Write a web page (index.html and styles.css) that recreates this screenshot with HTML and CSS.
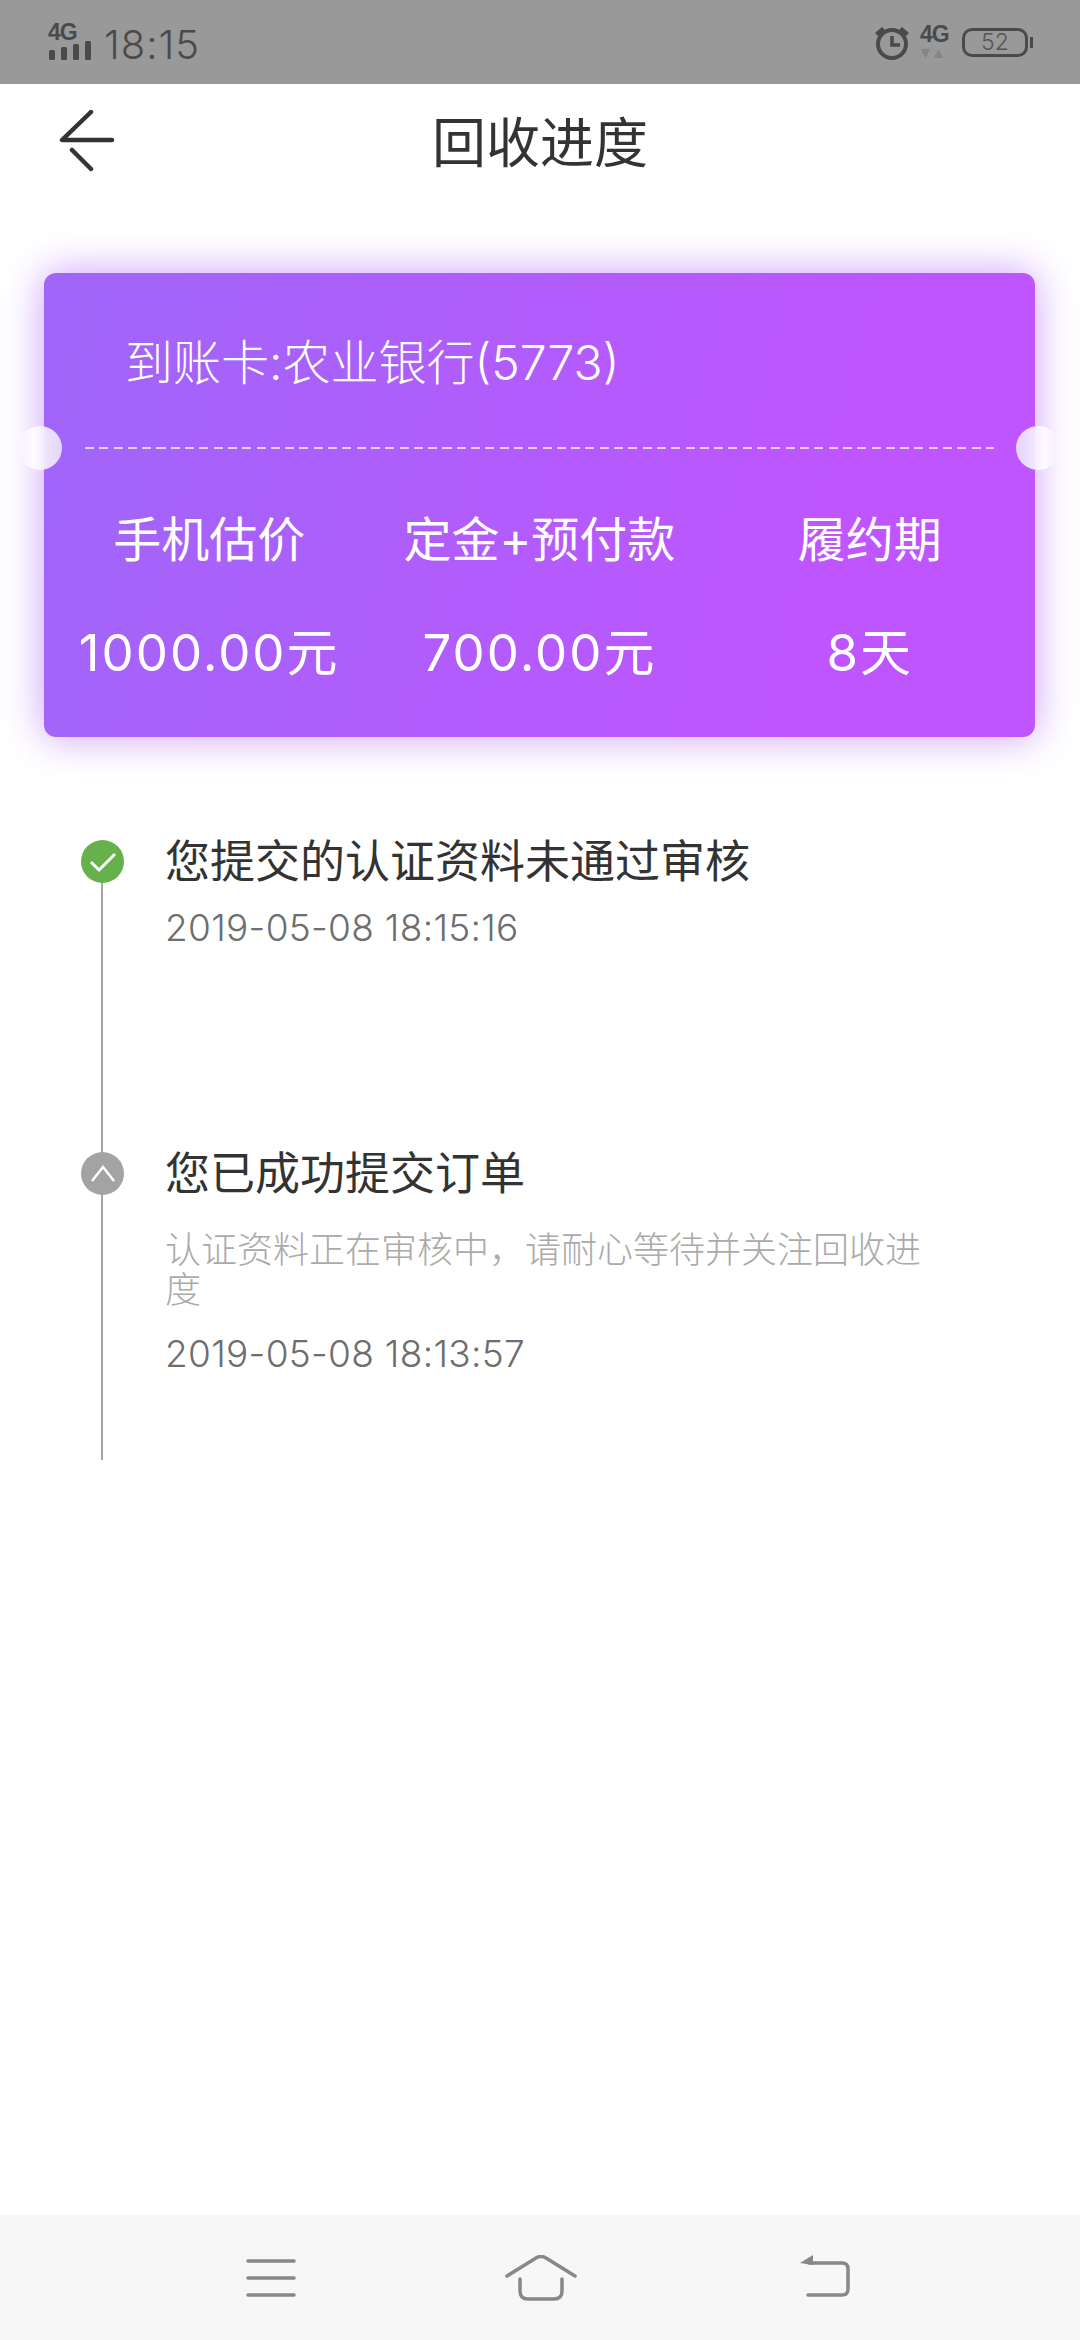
FILE: index.html
```html
<!DOCTYPE html>
<html lang="zh-CN">

<head>
    <meta charset="UTF-8">
    <meta name="viewport" content="width=device-width, initial-scale=1.0">
    <title>回收进度</title>

    <link rel="stylesheet" href="styles.css">
</head>

<body>
    <div class="status-bar">
        <div class="signal">
            <span class="net">4G</span>
            <svg class="bars" width="44" height="20" viewBox="0 0 44 20">
                <rect x="1" y="10" width="6" height="10" rx="1.5" />
                <rect x="13" y="7" width="6" height="13" rx="1.5" />
                <rect x="25" y="4" width="6" height="16" rx="1.5" />
                <rect x="37" y="1" width="6" height="19" rx="1.5" />
            </svg>
        </div>
        <span class="clock">18:15</span>
        <div class="status-right">
            <svg class="alarm" width="36" height="36" viewBox="0 0 36 36">
                <circle cx="18" cy="20" r="14" fill="none" stroke="#4a4a4a" stroke-width="4" />
                <path d="M18 12v9h8" fill="none" stroke="#4a4a4a" stroke-width="3.5" />
                <path d="M1 9l7-6 3 3-7 6zM35 9l-7-6-3 3 7 6z" fill="#4a4a4a" />
            </svg>
            <div class="data">
                <span class="net">4G</span>
                <svg width="24" height="10" viewBox="0 0 24 10">
                    <path d="M1 1h9l-4.500 9zM14 10h9l-4.500-9z" fill="#848484" />
                </svg>
            </div>
            <div class="battery"><span>52</span></div>
        </div>
    </div>

    <div class="header">
        <svg class="back" width="58" height="64" viewBox="0 0 58 64">
            <path d="M33 2L4 30h50M14 40l19 19" fill="none" stroke="#333" stroke-width="4.500" stroke-linecap="round" stroke-linejoin="round" />
        </svg>
        <h1>回收进度</h1>
    </div>

    <div class="card">
        <i class="notch left"></i>
        <i class="notch right"></i>
        <div class="account">到账卡:农业银行(5773)</div>
        <div class="dash"></div>
        <div class="stats">
            <div class="stat">
                <p>手机估价</p>
                <p class="num">1000.00元</p>
            </div>
            <div class="stat">
                <p>定金+预付款</p>
                <p class="num">700.00元</p>
            </div>
            <div class="stat">
                <p>履约期</p>
                <p class="num">8天</p>
            </div>
        </div>
    </div>

    <div class="timeline">
        <div class="step first">
            <div class="dot green">
                <svg width="28" height="22" viewBox="0 0 28 22">
                    <path d="M2 11l8 8L26 3" fill="none" stroke="#fff" stroke-width="3" />
                </svg>
            </div>
            <h2>您提交的认证资料未通过审核</h2>
            <p class="time">2019-05-08 18:15:16</p>
        </div>
        <div class="step second">
            <div class="dot gray">
                <svg width="26" height="20" viewBox="0 0 26 20">
                    <path d="M2 17L13 3l11 14" fill="none" stroke="#fff" stroke-width="2.500" />
                </svg>
            </div>
            <h2>您已成功提交订单</h2>
            <p class="desc">认证资料正在审核中，请耐心等待并关注回收进度</p>
            <p class="time">2019-05-08 18:13:57</p>
        </div>
    </div>

    <div class="nav">
        <svg width="50" height="38" viewBox="0 0 50 38">
            <path d="M2 2h46M2 19h46M2 36h46" stroke="#888" stroke-width="3.500" stroke-linecap="round" />
        </svg>
        <svg width="72" height="46" viewBox="0 0 72 46">
            <path d="M2 21L31 3q5-3 10 0l29 18M15 24v12q0 8 8 8h26q8 0 8-8V24" fill="none" stroke="#888" stroke-width="3.500" stroke-linecap="round" />
        </svg>
        <svg class="nav-back" width="52" height="42" viewBox="0 0 52 42">
            <path d="M1 8l13-8v10z" fill="#888" />
            <path d="M10 8h33q6 0 6 6v20q0 6-6 6H9" fill="none" stroke="#888" stroke-width="3.500" stroke-linecap="round" />
        </svg>
    </div>
</body>

</html>
```

FILE: styles.css
```css
* {
    box-sizing: border-box;
}

body {
    margin: 0;
    height: 2340px;
    display: flex;
    flex-direction: column;
    background: #fff;
    color: #333;
    font-family: Inter, "Noto Sans CJK SC", sans-serif;
    font-weight: 300;
}

p,
h1,
h2 {
    margin: 0;
    font-weight: 400;
}

/* 状态栏 */
.status-bar {
    height: 84px;
    flex: none;
    display: flex;
    align-items: center;
    padding: 0 52px 0 48px;
    background: #999;
    color: #4a4a4a;
}

.signal {
    width: 56px;
    display: flex;
    flex-direction: column;
}

.net {
    font-family: "Liberation Sans", sans-serif;
    font-size: 23px;
    line-height: 17px;
    font-weight: 700;
    letter-spacing: -1px;
    color: #4a4a4a;
}

.bars {
    fill: #4a4a4a;
    margin-top: -1px;
}

.clock {
    font-family: Inter, sans-serif;
    font-weight: 300;
    font-size: 40px;
    letter-spacing: 1px;
    margin: 4px 0 0 0;
}

.status-right {
    margin-left: auto;
    display: flex;
    align-items: center;
    gap: 10px;
}

.data {
    width: 30px;
    display: flex;
    flex-direction: column;
    gap: 5px;
}

.battery {
    width: 66px;
    height: 29px;
    margin-left: 2px;
    position: relative;
    border: 3px solid #4a4a4a;
    border-radius: 10px;
    text-align: center;
    font-family: Inter, sans-serif;
    font-size: 23px;
    line-height: 23px;
    color: #555;
}

.battery::after {
    content: "";
    position: absolute;
    right: -8px;
    top: 6px;
    width: 3px;
    height: 11px;
    background: #4a4a4a;
}

/* 标题 */
.header {
    height: 116px;
    flex: none;
    display: grid;
    grid-template-columns: 1fr auto 1fr;
    align-items: center;
    padding: 0 58px;
}

.header h1 {
    grid-column: 2;
    grid-row: 1;
    margin-top: -5px;
    font-size: 54px;
    font-weight: 400;
    color: #333;
}

.back {
    grid-column: 1;
    grid-row: 1;
}

/* 卡片 */
.card {
    position: relative;
    width: 991px;
    height: 464px;
    margin: 73px 0 0 44px;
    flex: none;
    border-radius: 12px;
    background: linear-gradient(105deg, #9f66f8, #bf55ff 80%);
    box-shadow: 0 0 40px rgba(170, 90, 250, .6);
    color: #fff;
}

.notch {
    position: absolute;
    top: 153px;
    width: 44px;
    height: 44px;
    border-radius: 50%;
}

.notch.left {
    left: -26px;
    background: linear-gradient(to right, rgba(255, 255, 255, 0), rgba(255, 255, 255, .9) 35%, #e4d4fb);
}

.notch.right {
    right: -25px;
    background: linear-gradient(to left, rgba(255, 255, 255, 0), rgba(255, 255, 255, .9) 35%, #e4d4fb);
}

.account {
    padding: 54px 0 0 81px;
    height: 174px;
    font-size: 48px;
    line-height: 72px;
}

.dash {
    height: 2px;
    margin: 0 41px;
    background: repeating-linear-gradient(to right, rgba(255, 255, 255, .7) 0 9px, transparent 0 14.3px);
}

.stats {
    display: grid;
    grid-template-columns: repeat(3, 1fr);
    text-align: center;
    padding-top: 57px;
}

.stat p {
    font-size: 48px;
    line-height: 68px;
}

.stat .num {
    margin-top: 45px;
    font-size: 51px;
    letter-spacing: 2px;
}

/* 进度 */
.timeline {
    padding: 97px 0 0 165px;
}

.step {
    position: relative;
    width: 780px;
}

.step.first {
    height: 312px;
}

.step.second {
    height: 314px;
}

.step::before {
    content: "";
    position: absolute;
    left: -64px;
    top: 18px;
    bottom: 0;
    width: 2px;
    background: #a5a5a5;
}

.step.first::before {
    bottom: -22px;
}

.dot {
    position: absolute;
    left: -84px;
    top: 6px;
    width: 43px;
    height: 43px;
    border-radius: 50%;
    display: flex;
    align-items: center;
    justify-content: center;
}

.dot.green {
    background: #67b14d;
}

.dot.gray {
    background: #a3a3a3;
}

.step h2 {
    font-size: 45px;
    line-height: 56px;
    color: #333;
}

.time {
    font-size: 37px;
    letter-spacing: .3px;
    line-height: 44px;
    font-weight: 300;
    color: #6e6e6e;
    margin-top: 16px;
}

.desc {
    font-size: 36px;
    line-height: 40px;
    font-weight: 300;
    color: #aaa;
    margin-top: 28px;
}

.second .time {
    margin-top: 22px;
}

/* 底部导航 */
.nav {
    margin-top: auto;
    height: 125px;
    flex: none;
    display: flex;
    align-items: center;
    padding: 0 0 0 246px;
    gap: 209px;
    background: #f7f7f7;
}

.nav-back {
    margin: -4px 0 0 13px;
}
```
